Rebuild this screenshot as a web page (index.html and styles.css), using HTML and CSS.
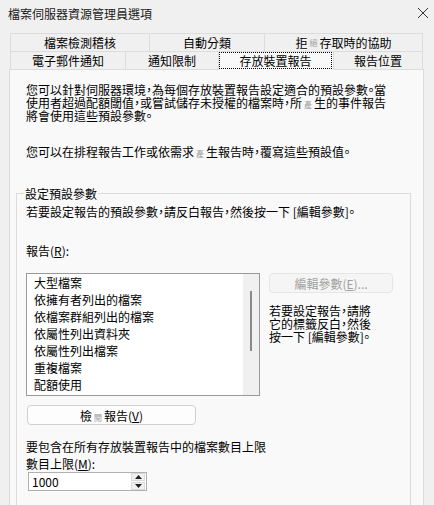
FILE: index.html
```html
<!DOCTYPE html>
<html lang="zh-Hant">
<head>
    <meta charset="UTF-8">
    <meta name="viewport" content="width=device-width, initial-scale=1.0">
    <title>檔案伺服器資源管理員選項</title>
    <link rel="stylesheet" href="styles.css">
</head>
<body>
    <div class="titlebar">
        <span class="title">檔案伺服器資源管理員選項</span>
        <svg class="close" width="12" height="12" viewBox="0 0 12 12">
            <path d="M1 1 L11 11 M11 1 L1 11" stroke="#333" stroke-width="1" fill="none"/>
        </svg>
    </div>

    <!-- Tabs -->
    <div class="tabs">
        <div class="tab-row row-top">
            <div class="tab">檔案檢測稽核</div>
            <div class="tab">自動分類</div>
            <div class="tab">拒<span class="fb">絕</span>存取時的協助</div>
        </div>
        <div class="tab-row row-bottom">
            <div class="tab">電子郵件通知</div>
            <div class="tab">通知限制</div>
            <div class="tab selected"><span class="focus">存放裝置報告</span></div>
            <div class="tab">報告位置</div>
        </div>
    </div>

    <div class="panel">
        <p class="intro">您可以針對伺服器環境，為每個存放裝置報告設定適合的預設參數。當<br>使用者超過配額閾值，或嘗試儲存未授權的檔案時，所<span class="fb">產</span>生的事件報告<br>將會使用這些預設參數。</p>
        <p class="intro second">您可以在排程報告工作或依需求<span class="fb">產</span>生報告時，覆寫這些預設值。</p>

        <fieldset class="group">
            <legend>設定預設參數</legend>
            <p>若要設定報告的預設參數，請反白報告，然後按一下 [編輯參數]。</p>
            <label class="field-label reports-label">報告(<u>R</u>):</label>

            <div class="report-row">
                <div class="listbox">
                    <ul class="items">
                        <li>大型檔案</li>
                        <li>依擁有者列出的檔案</li>
                        <li>依檔案群組列出的檔案</li>
                        <li>依屬性列出資料夾</li>
                        <li>依屬性列出檔案</li>
                        <li>重複檔案</li>
                        <li>配額使用</li>
                    </ul>
                    <div class="scrollbar"><div class="thumb"></div></div>
                </div>
                <div class="side">
                    <button class="edit-btn" disabled>編輯參數(<u>E</u>)...</button>
                    <p class="hint">若要設定報告，請將<br>它的標籤反白，然後<br>按一下 [編輯參數]。</p>
                </div>
            </div>

            <button class="view-btn">檢<span class="fb">閱</span>報告(<u>V</u>)</button>

            <p class="limit-text">要包含在所有存放裝置報告中的檔案數目上限</p>
            <label class="field-label limit-label">數目上限(<u>M</u>):</label>
            <div class="spin">
                <span class="spin-value">1000</span>
                <div class="spin-btns">
                    <span class="spin-btn"><svg width="7" height="4" viewBox="0 0 7 4"><path d="M3.5 0 L7 4 L0 4 Z" fill="#222"/></svg></span>
                    <span class="spin-btn"><svg width="7" height="4" viewBox="0 0 7 4"><path d="M0 0 L7 0 L3.5 4 Z" fill="#222"/></svg></span>
                </div>
            </div>
        </fieldset>
    </div>
</body>
</html>
```

FILE: styles.css
```css
body {
    margin: 0;
    width: 434px;
    height: 505px;
    overflow: hidden;
    background-color: #f0f0f0;
    font-family: "Noto Sans CJK TC", "Noto Sans CJK SC", sans-serif;
    font-size: 12px;
    line-height: 13px;
    color: #000;
    font-feature-settings: "halt";
}

p {
    margin: 0;
}

/* fallback glyphs drawn small and grey, as in the dialog */
.fb {
    display: inline-block;
    width: 12px;
    text-align: center;
    font-size: 8px;
    line-height: 8px;
    vertical-align: 0;
    color: #9a9a9a;
}

.titlebar {
    height: 26px;
    display: flex;
    align-items: center;
    justify-content: space-between;
    padding: 0 5px 0 8px;
}

.title {
    color: #1a1a1a;
}

/* Tabs */
.tabs {
    margin: 7px 11px 0 10px;
}

.tab-row {
    display: grid;
    height: 18px;
}

.row-top {
    grid-template-columns: 139px 115px 159px;
}

.row-bottom {
    grid-template-columns: 115px 93px 115px 90px;
}

.tab {
    display: flex;
    align-items: center;
    justify-content: center;
    box-sizing: border-box;
    background-color: #f0f0f0;
    border-top: 1px solid #dcdcdc;
    border-left: 1px solid #dcdcdc;
}

.tab:last-child {
    border-right: 1px solid #dcdcdc;
}

.tab.selected {
    position: relative;
    z-index: 1;
    margin-bottom: -1px;
    background-color: #f9f9f9;
    align-items: stretch;
}

.tab .focus {
    flex: 1;
    display: flex;
    align-items: center;
    justify-content: center;
    border: 1px dotted #000;
    margin: 0 1px 1px 0;
}

/* Panel */
.panel {
    margin: 0 10px 0 9px;
    background-color: #f9f9f9;
    border: 1px solid #dcdcdc;
    padding: 13px 12px 40px 6px;
}

.intro {
    padding-left: 10px;
}

.intro.second {
    margin-top: 23px;
}

.group {
    margin: 29px 0 0 0;
    padding: 5px 9px 20px 9px;
    border: 1px solid #dcdcdc;
    min-width: 0;
}

.group legend {
    padding: 0 1px;
    margin-left: -2px;
}

.field-label {
    display: block;
}

.reports-label {
    margin-top: 26px;
}

.report-row {
    display: flex;
    align-items: flex-start;
    margin-top: 16px;
}

.listbox {
    width: 234px;
    height: 123px;
    box-sizing: border-box;
    border: 1px solid #9a9a9a;
    background-color: #fff;
    display: flex;
}

.items {
    flex: 1;
    margin: 0;
    padding: 0 0 0 7px;
    list-style: none;
    line-height: 17px;
}

.scrollbar {
    width: 16px;
    background-color: #f0f0f0;
}

.thumb {
    width: 2px;
    height: 60px;
    margin: 17px auto 0;
    background-color: #8a8a8a;
}

.side {
    margin-left: 9px;
}

button {
    font-family: inherit;
    font-size: 12px;
    line-height: 13px;
    height: 20px;
    padding: 0;
    border-radius: 4px;
    box-sizing: border-box;
}

.edit-btn {
    width: 124px;
    border: 1px solid #e5e5e5;
    background-color: #f5f5f5;
    color: #a0a0a0;
}

.hint {
    margin-top: 11px;
}

.view-btn {
    display: block;
    width: 169px;
    margin: 9px 0 0 1px;
    border: 1px solid #d0d0d0;
    background-color: #fdfdfd;
    color: #000;
}

.limit-text {
    margin-top: 15px;
}

.limit-label {
    margin-top: 4px;
}

.spin {
    display: flex;
    width: 119px;
    height: 19px;
    box-sizing: border-box;
    margin: 2px 0 0 2px;
    border: 1px solid #b0b0b0;
    background-color: #fff;
}

.spin-value {
    flex: 1;
    padding-left: 3px;
    line-height: 17px;
}

.spin-btns {
    width: 14px;
    display: flex;
    flex-direction: column;
    gap: 1px;
    margin: 0 1px 0 0;
}

.spin-btn {
    flex: 1;
    display: flex;
    align-items: center;
    justify-content: center;
    background-color: #f0f0f0;
    border: 1px solid #dadada;
}
```
